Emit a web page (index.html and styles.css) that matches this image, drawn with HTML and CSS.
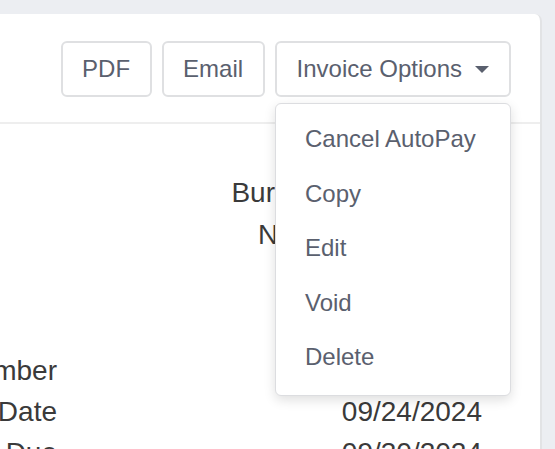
FILE: index.html
```html
<!DOCTYPE html>
<html lang="en">
  <head>
    <meta charset="UTF-8" />
    <meta name="viewport" content="width=device-width, initial-scale=1.0" />
    <title>Invoice</title>
    <link rel="stylesheet" href="styles.css">
  </head>
  <body>
    <div class="card">
      <div class="card-header">
        <button class="btn">PDF</button>
        <button class="btn">Email</button>
        <div class="dropdown">
          <button class="btn btn-options">
            Invoice Options <span class="caret"></span>
          </button>
          <ul class="dropdown-menu">
            <li>Cancel AutoPay</li>
            <li>Copy</li>
            <li>Edit</li>
            <li>Void</li>
            <li>Delete</li>
          </ul>
        </div>
      </div>
      <div class="card-body">
        <div class="company">
          <div>Burlington Plumbing</div>
          <div>North Shore Drive</div>
        </div>
        <div class="details">
          <div class="label">Invoice Number</div>
          <div class="value">1042</div>
          <div class="label">Invoice Date</div>
          <div class="value">09/24/2024</div>
          <div class="label">Payment Due</div>
          <div class="value">09/30/2024</div>
        </div>
      </div>
    </div>
  </body>
</html>
```

FILE: styles.css
```css
body {
  margin: 0;
  padding-top: 14px;
  background-color: #eceef2;
  font-family: "Liberation Sans", Arial, sans-serif;
  overflow: hidden;
}

.card {
  margin-left: -200px;
  width: 740px;
  height: 600px;
  background-color: #fff;
  border-right: 2px solid #e2e3e5;
  border-top-right-radius: 7px;
}

.card-header {
  display: flex;
  justify-content: flex-end;
  gap: 10px;
  padding: 27px 29px 25px 0;
  border-bottom: 2px solid #eeeeee;
}

.btn {
  font-family: inherit;
  font-size: 24px;
  line-height: 28px;
  color: #5a606e;
  background-color: #fff;
  border: 2px solid #dfe0e2;
  border-radius: 6px;
  padding: 12px 19.5px;
  cursor: pointer;
}

.btn-options {
  display: flex;
  align-items: center;
  gap: 13px;
  padding: 12px 20px;
}

.caret {
  width: 0;
  height: 0;
  border-left: 7.5px solid transparent;
  border-right: 7.5px solid transparent;
  border-top: 7px solid #5a606e;
}

.dropdown {
  position: relative;
}

.dropdown-menu {
  position: absolute;
  top: calc(100% + 6px);
  right: 0;
  width: 234px;
  margin: 0;
  padding: 8px 0 10px;
  list-style: none;
  background-color: #fff;
  border: 1px solid #dcdde0;
  border-radius: 6px;
  box-shadow: 0 4px 12px rgba(0, 0, 0, 0.13);
  z-index: 2;
}

.dropdown-menu li {
  padding: 0 29px;
  font-size: 24px;
  line-height: 54.5px;
  color: #5a606e;
  white-space: nowrap;
}

.card-body {
  padding: 48px 58px 0 0;
  font-size: 28px;
  color: #3a3a3a;
}

.company {
  text-align: right;
  line-height: 42px;
  white-space: nowrap;
}

.details {
  display: grid;
  grid-template-columns: 257px 1fr;
  margin-top: 93.5px;
  line-height: 41px;
  white-space: nowrap;
}

.details .label,
.details .value {
  text-align: right;
}
```
